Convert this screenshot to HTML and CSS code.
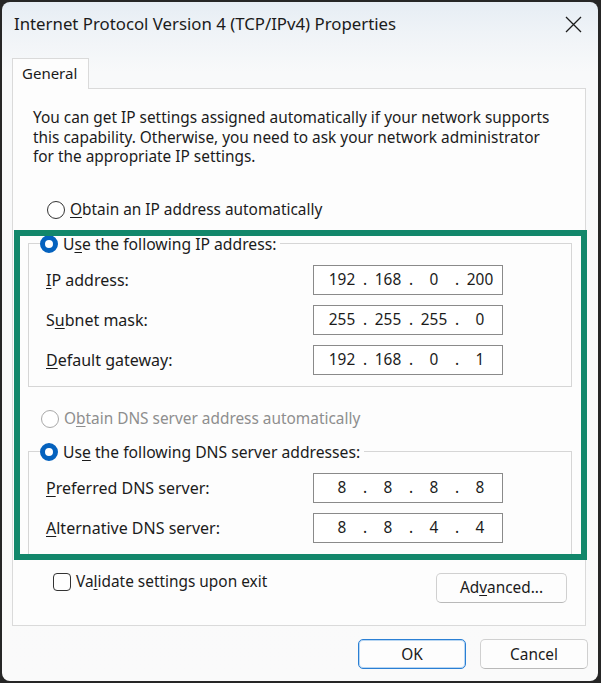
FILE: index.html
```html
<!DOCTYPE html>
<html lang="en">
<head>
    <meta charset="UTF-8">
    <meta name="viewport" content="width=device-width, initial-scale=1.0">
    <title>Internet Protocol Version 4 (TCP/IPv4) Properties</title>
    <link rel="stylesheet" href="styles.css">
</head>
<body>
    <div class="window">
        <div class="titlebar">
            <span class="title">Internet Protocol Version 4 (TCP/IPv4) Properties</span>
            <span class="close">
                <svg width="17" height="17" viewBox="0 0 17 17"><path d="M1 1L16 16M16 1L1 16" stroke="#1c1c1c" stroke-width="1.3" fill="none"/></svg>
            </span>
        </div>
        <div class="tabs">
            <div class="tab">General</div>
        </div>
        <div class="panel">
            <p class="intro">You can get IP settings assigned automatically if your network supports<br>this capability. Otherwise, you need to ask your network administrator<br>for the appropriate IP settings.</p>

            <div class="option option-ip">
                <span class="radio"></span>
                <span><u>O</u>btain an IP address automatically</span>
            </div>

            <div class="group">
                <div class="legend">
                    <span class="radio checked"></span>
                    <span>U<u>s</u>e the following IP address:</span>
                </div>
                <div class="row">
                    <span class="label"><u>I</u>P address:</span>
                    <div class="ipbox"><span>192</span><i>.</i><span>168</span><i>.</i><span>0</span><i>.</i><span>200</span></div>
                </div>
                <div class="row">
                    <span class="label">S<u>u</u>bnet mask:</span>
                    <div class="ipbox"><span>255</span><i>.</i><span>255</span><i>.</i><span>255</span><i>.</i><span>0</span></div>
                </div>
                <div class="row">
                    <span class="label"><u>D</u>efault gateway:</span>
                    <div class="ipbox"><span>192</span><i>.</i><span>168</span><i>.</i><span>0</span><i>.</i><span>1</span></div>
                </div>
            </div>

            <div class="option option-dns disabled">
                <span class="radio"></span>
                <span>O<u>b</u>tain DNS server address automatically</span>
            </div>

            <div class="group group-dns">
                <div class="legend">
                    <span class="radio checked"></span>
                    <span>Us<u>e</u> the following DNS server addresses:</span>
                </div>
                <div class="row">
                    <span class="label"><u>P</u>referred DNS server:</span>
                    <div class="ipbox"><span>8</span><i>.</i><span>8</span><i>.</i><span>8</span><i>.</i><span>8</span></div>
                </div>
                <div class="row">
                    <span class="label"><u>A</u>lternative DNS server:</span>
                    <div class="ipbox"><span>8</span><i>.</i><span>8</span><i>.</i><span>4</span><i>.</i><span>4</span></div>
                </div>
            </div>

            <div class="bottom-row">
                <div class="check-option">
                    <span class="checkbox"></span>
                    <span>Va<u>l</u>idate settings upon exit</span>
                </div>
                <button class="btn btn-advanced">Ad<u>v</u>anced...</button>
            </div>
        </div>

        <div class="actions">
            <button class="btn btn-ok">OK</button>
            <button class="btn">Cancel</button>
        </div>

        <div class="highlight"></div>
    </div>
</body>
</html>
```

FILE: styles.css
```css
* {
    margin: 0;
    padding: 0;
    box-sizing: border-box;
}
body {
    width: 601px;
    height: 683px;
    background: #262626;
    font-family: "Noto Sans", "Open Sans", sans-serif;
    font-size: 15.4px;
    color: #1b1b1b;
    overflow: hidden;
}
u {
    text-decoration-thickness: 1px;
    text-underline-offset: 2px;
}
.window {
    position: relative;
    width: 596px;
    height: 679px;
    margin: 2px 3px 0 2px;
    border-radius: 8px;
    background: linear-gradient(180deg, #e6edf4 0, #eff3f7 30px, #f8f9fa 70px, #fafafa 100%);
    overflow: hidden;
}

/* title bar */
.titlebar {
    height: 56px;
    padding: 10px 0 0 12px;
    display: flex;
    justify-content: space-between;
}
.title {
    font-size: 16.8px;
    line-height: 24px;
}
.close {
    width: 17px;
    height: 24px;
    margin-right: 16px;
    display: flex;
    align-items: center;
}

/* tab */
.tabs {
    padding-left: 10px;
    display: flex;
}
.tab {
    width: 77px;
    height: 31px;
    margin-bottom: -1px;
    padding: 2px 0 0 9px;
    border: 1px solid #dadada;
    border-bottom: none;
    background: #fdfdfd;
    position: relative;
    z-index: 1;
    font-size: 15px;
    line-height: 24px;
}
.panel {
    width: 574px;
    height: 538px;
    margin-left: 10px;
    padding: 19px 13px 0 0;
    border: 1px solid #dadada;
    background: #fdfdfd;
}
.intro {
    padding-left: 20px;
    line-height: 19.5px;
}

/* radios and groups */
.option, .legend, .check-option {
    display: flex;
    align-items: center;
    gap: 5px;
    height: 20px;
    line-height: 20px;
}
.option-ip {
    margin: 33px 0 0 34px;
}
.option-dns {
    margin: 22px 0 0 28px;
}
.disabled {
    color: #8e8e8e;
}
.radio {
    width: 18px;
    height: 18px;
    flex: none;
    border: 1px solid #333;
    border-radius: 50%;
    background: #fff;
}
.disabled .radio {
    border-color: #a9a9a9;
}
.radio.checked {
    border: 5px solid #0562be;
    background: #fff;
}
.group {
    margin: 23px 0 0 15px;
    padding: 0 0 11px 17px;
    border: 1px solid #d6d6d6;
}
.group-dns {
    margin-top: 22px;
    padding-bottom: 13px;
}
.legend {
    width: fit-content;
    margin: -10px 0 0 -6px;
    padding-right: 4px;
    background: #fdfdfd;
    font-size: 15.7px;
}
.row {
    display: flex;
    align-items: center;
    margin-top: 10px;
}
.legend + .row {
    margin-top: 11px;
}
.label {
    width: 267px;
    font-size: 16px;
}
.ipbox {
    width: 190px;
    height: 30px;
    padding-left: 10px;
    border: 1px solid #8a8a8a;
    background: #fff;
    display: flex;
    align-items: center;
}
.ipbox span {
    width: 36px;
    text-align: center;
}
.ipbox i {
    width: 10px;
    font-style: normal;
    text-align: center;
}

/* checkbox + advanced */
.bottom-row {
    display: flex;
    justify-content: space-between;
    align-items: flex-start;
    margin: 16px 5px 0 40px;
}
.check-option {
    margin-top: -1px;
}
.checkbox {
    width: 18px;
    height: 18px;
    flex: none;
    border: 1px solid #333;
    border-radius: 4px;
    background: #fff;
}
.btn {
    height: 30px;
    width: 108px;
    border: 1px solid #d0d0d0;
    border-bottom-color: #b9b9b9;
    border-radius: 5px;
    background: #fdfdfd;
    font-family: inherit;
    font-size: 15.4px;
    color: #1b1b1b;
}
.btn-advanced {
    width: 131px;
}
.actions {
    display: flex;
    justify-content: flex-end;
    gap: 14px;
    margin-top: 13px;
    padding-right: 10px;
}
.btn-ok {
    border: 1px solid #2a7fd4;
    box-shadow: inset 0 0 0 1px #b8d6f2;
}

/* annotation box drawn over the dialog */
.highlight {
    position: absolute;
    left: 12px;
    top: 228px;
    width: 573px;
    height: 330px;
    border: 6px solid #12876b;
}
```
